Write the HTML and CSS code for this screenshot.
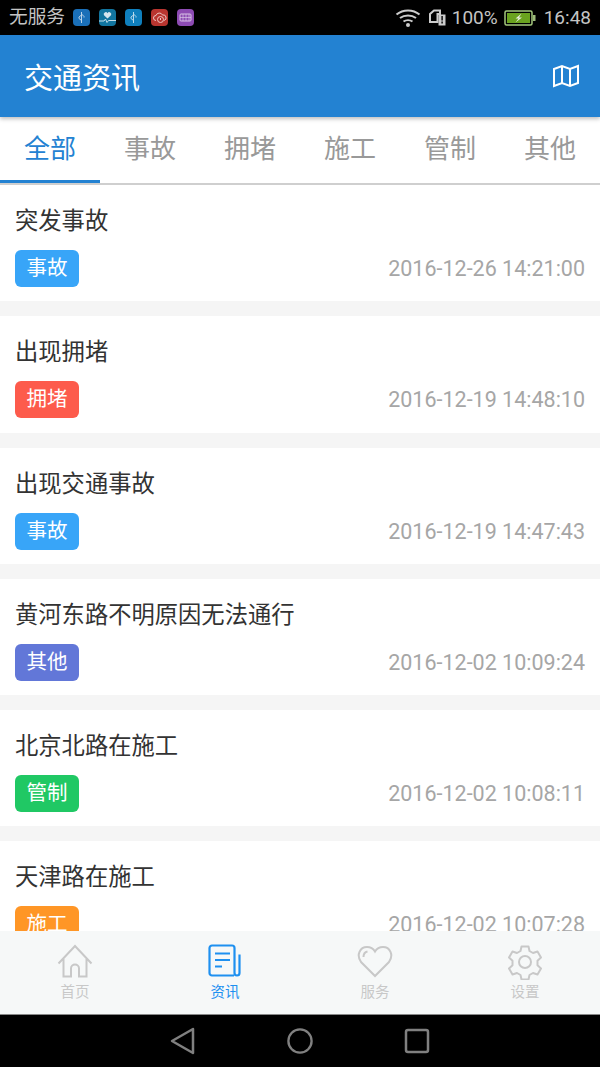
FILE: index.html
```html
<!DOCTYPE html>
<html lang="zh">
<head>
<meta charset="utf-8">
<title>交通资讯</title>
<link rel="stylesheet" href="styles.css">
</head>
<body>
<div class="app">
  <div class="status">
    <div class="status-left">
      <span class="carrier">无服务</span>
      <span class="notes">
        <svg class="note" viewBox="0 0 17 17"><rect width="17" height="17" rx="4" fill="#1a6fb8"/><path d="M8.5 3v11M8.5 6l-2.500 2v1.500l2.500 2M8.500 5l2.500 2.500v1" fill="none" stroke="#b9d3ea" stroke-width="1"/></svg>
        <svg class="note" viewBox="0 0 17 17"><rect width="17" height="17" rx="4" fill="#12759f"/><path d="M8.500 9.500L5 6.200a2 2 0 0 1 3.500-2a2 2 0 0 1 3.500 2z" fill="#d5e6ee"/><path d="M0 12h5l1.500-2l1.500 3.500l1.500-2h8" fill="none" stroke="#c4dde8" stroke-width="1"/></svg>
        <svg class="note" viewBox="0 0 17 17"><rect width="17" height="17" rx="4" fill="#0f7fbd"/><path d="M8.500 3v11M8.500 6l-2.500 2v1.500l2.500 2M8.500 5l2.500 2.500v1" fill="none" stroke="#b9d8ea" stroke-width="1"/></svg>
        <svg class="note" viewBox="0 0 17 17"><rect width="17" height="17" rx="4" fill="#b9352f"/><path d="M5 11.500a2.500 2.500 0 0 1 0-5a3.500 3.500 0 0 1 6.500-.5a2.800 2.800 0 0 1 1.500 5.500" fill="none" stroke="#edc6c3" stroke-width="1"/><circle cx="9.500" cy="10.500" r="3" fill="#b9352f" stroke="#edc6c3"/><path d="M9.500 9v2" stroke="#edc6c3"/></svg>
        <svg class="note" viewBox="0 0 17 17"><rect width="17" height="17" rx="4" fill="#8d4bb3"/><rect x="3" y="5" width="11" height="7" rx="1" fill="none" stroke="#d9c3e6"/><path d="M3 8.500h11M6 5v7M9 5v7M12 5v7" stroke="#d9c3e6" stroke-width=".7"/></svg>
      </span>
    </div>
    <div class="status-right">
      <svg class="wifi" viewBox="0 0 26 19"><path d="M1.500 6.500C8 1 18 1 24.500 6.500M5 10c4.500-3.500 11.500-3.500 16 0M8.500 13.500c2.500-1.800 6.500-1.800 9 0" fill="none" stroke="#ccc" stroke-width="2"/><circle cx="13" cy="17" r="2" fill="#ccc"/></svg>
      <svg class="sim" viewBox="0 0 18 18"><path d="M6 1.500h6v3.500H9.500v8H2v-8z" fill="none" stroke="#ccc" stroke-width="2"/><rect x="10.500" y="5.500" width="7" height="11" fill="#ccc"/><rect x="13.400" y="7" width="1.400" height="4.500" fill="#000"/><rect x="13.400" y="12.500" width="1.400" height="2" fill="#000"/></svg>
      <span class="batt-text">100%</span>
      <svg class="battery" viewBox="0 0 32 16"><rect x="1" y="1" width="27" height="14" rx="1.500" fill="#000" stroke="#a5c97e" stroke-width="1.500"/><rect x="3" y="3" width="23" height="10" fill="#6aa31f"/><rect x="29" y="5" width="2.500" height="6" fill="#9dbb7a"/><path d="M17.500 3.500l-6 5h3l-3 4l6.500-5h-3z" fill="#e8eedd"/></svg>
      <span class="clock">16:48</span>
    </div>
  </div>

  <header class="header">
    <h1 class="title">交通资讯</h1>
    <svg class="map" viewBox="0 0 26 24"><path d="M1 5l8-3l8 3l8-3v17l-8 3l-8-3l-8 3zM9 2v17M17 5v17" fill="none" stroke="#fff" stroke-width="2" stroke-linejoin="miter"/></svg>
  </header>

  <nav class="tabs">
    <a class="tab active">全部</a>
    <a class="tab">事故</a>
    <a class="tab">拥堵</a>
    <a class="tab">施工</a>
    <a class="tab">管制</a>
    <a class="tab">其他</a>
  </nav>

  <main class="list">
    <article class="card">
      <div class="card-title">突发事故</div>
      <div class="card-meta"><span class="tag tag-accident">事故</span><time class="date">2016-12-26 14:21:00</time></div>
    </article>
    <article class="card">
      <div class="card-title">出现拥堵</div>
      <div class="card-meta"><span class="tag tag-jam">拥堵</span><time class="date">2016-12-19 14:48:10</time></div>
    </article>
    <article class="card">
      <div class="card-title">出现交通事故</div>
      <div class="card-meta"><span class="tag tag-accident">事故</span><time class="date">2016-12-19 14:47:43</time></div>
    </article>
    <article class="card">
      <div class="card-title">黄河东路不明原因无法通行</div>
      <div class="card-meta"><span class="tag tag-other">其他</span><time class="date">2016-12-02 10:09:24</time></div>
    </article>
    <article class="card">
      <div class="card-title">北京北路在施工</div>
      <div class="card-meta"><span class="tag tag-control">管制</span><time class="date">2016-12-02 10:08:11</time></div>
    </article>
    <article class="card">
      <div class="card-title">天津路在施工</div>
      <div class="card-meta"><span class="tag tag-work">施工</span><time class="date">2016-12-02 10:07:28</time></div>
    </article>
  </main>

  <footer class="bottom">
    <a class="item">
      <svg class="item-icon" viewBox="0 0 36 36"><path d="M1.500 19.500L18 2l16.500 17.500M6.500 15v17.500h7.500v-8a4 4 0 0 1 8 0v8h7.500V15" fill="none" stroke="#c8c8c8" stroke-width="2"/></svg>
      <span class="item-label">首页</span>
    </a>
    <a class="item on">
      <svg class="item-icon" viewBox="0 0 36 36"><path d="M27 31.500H5a2.500 2.500 0 0 1-2.500-2.500V4A2.500 2.500 0 0 1 5 1.500h20A2.500 2.500 0 0 1 27.500 4v25a2.500 2.500 0 0 0 5 0V10.500" fill="none" stroke="#1e90f0" stroke-width="2.200"/><path d="M8 9.500h15M8 16h15M8 22.500h7" fill="none" stroke="#1e90f0" stroke-width="2.200"/></svg>
      <span class="item-label">资讯</span>
    </a>
    <a class="item">
      <svg class="item-icon" viewBox="0 0 36 36"><path d="M18 32L4 18C-1 11 3 3 10 3c4 0 6.500 2 8 4.500C19.500 5 22 3 26 3c7 0 11 8 6 15z" fill="none" stroke="#c8c8c8" stroke-width="2"/><path d="M6.500 13c0-3 1.500-5 4-5.500" fill="none" stroke="#c8c8c8" stroke-width="2"/></svg>
      <span class="item-label">服务</span>
    </a>
    <a class="item">
      <svg class="item-icon" viewBox="0 0 36 36"><path d="M14.500 2.500h7l1 4.500l3.500 2l4.500-1.500l3.500 6-3.500 3.200v4.600l3.500 3.200-3.500 6-4.500-1.500-3.500 2-1 4.500h-7l-1-4.500-3.500-2-4.500 1.500-3.500-6 3.500-3.200v-4.600l-3.500-3.200 3.500-6 4.500 1.500 3.500-2z" fill="none" stroke="#c8c8c8" stroke-width="2" stroke-linejoin="round"/><circle cx="18" cy="18" r="6" fill="none" stroke="#c8c8c8" stroke-width="2"/></svg>
      <span class="item-label">设置</span>
    </a>
  </footer>

  <div class="softkeys">
    <svg class="key" viewBox="0 0 26 28"><path d="M23 2L2 14l21 12z" fill="none" stroke="#808080" stroke-width="2.500" stroke-linejoin="round"/></svg>
    <svg class="key" viewBox="0 0 28 28"><circle cx="14" cy="14" r="12.500" fill="none" stroke="#808080" stroke-width="2.500"/></svg>
    <svg class="key" viewBox="0 0 26 26"><rect x="2" y="2" width="22" height="22" rx="2" fill="none" stroke="#808080" stroke-width="2.500"/></svg>
  </div>
</div>
</body>
</html>
```

FILE: styles.css
```css
* { box-sizing: border-box; }
html, body { margin: 0; padding: 0; }
body {
  background: #fff;
  font-family: Roboto, "Noto Sans CJK SC", sans-serif;
}
.app {
  width: 600px;
  height: 1067px;
  display: flex;
  flex-direction: column;
  overflow: hidden;
}
.status {
  flex: 0 0 35px;
  background: #000;
  color: #c4c4c4;
  display: flex;
  justify-content: space-between;
  align-items: center;
  padding: 0 9px;
}
.status-left, .status-right, .notes { display: flex; align-items: center; }
.carrier { font-size: 18.7px; line-height: 35px; }
.notes { gap: 9px; margin-left: 8px; }
.note { width: 17px; height: 17px; display: block; }
.wifi { width: 26px; height: 19px; margin-right: 7px; }
.sim { width: 18px; height: 18px; margin-right: 6px; }
.batt-text { font-size: 19px; }
.battery { width: 32px; height: 16px; margin: 0 8px 0 6px; }
.clock { font-size: 19px; }

.header {
  flex: 0 0 82px;
  background: #2382d2;
  display: flex;
  align-items: center;
  justify-content: space-between;
  padding: 0 21px 0 24px;
  position: relative;
  z-index: 2;
  box-shadow: 0 2px 4px rgba(0, 0, 0, .25);
}
.title {
  margin: 0;
  font-size: 29px;
  font-weight: 400;
  color: #fff;
}
.map { width: 26px; height: 24px; display: block; }

.tabs {
  flex: 0 0 66px;
  display: flex;
  border-bottom: 2px solid #cfcfcf;
  background: #fff;
}
.tab {
  flex: 0 0 100px;
  height: 66px;
  line-height: 64px;
  text-align: center;
  font-size: 26px;
  color: #999;
}
.tab.active {
  color: #2382d2;
  border-bottom: 3px solid #2382d2;
}

.list {
  flex: 1 1 0;
  min-height: 0;
  overflow: hidden;
  background: #f5f5f5;
  display: flex;
  flex-direction: column;
  gap: 15px;
}
.card {
  flex: 0 0 116.3px;
  background: #fff;
  padding: 20px 15px 0;
}
.card-title {
  font-size: 23.3px;
  line-height: 32px;
  color: #333;
}
.card-meta {
  margin-top: 13px;
  display: flex;
  justify-content: space-between;
  align-items: center;
}
.tag {
  width: 64px;
  height: 37px;
  line-height: 37px;
  border-radius: 6px;
  text-align: center;
  font-size: 20.5px;
  color: #fff;
}
.tag-accident { background: #38a5f8; }
.tag-jam { background: #fd5b4c; }
.tag-other { background: #6277d8; }
.tag-control { background: #20c864; }
.tag-work { background: #ff9626; }
.date {
  font-size: 21.5px;
  color: #a6a6a6;
}

.bottom {
  flex: 0 0 84px;
  background: #f6f8f8;
  border-bottom: 1px solid #888;
  display: flex;
  position: relative;
}
.item {
  flex: 1 1 0;
  display: flex;
  flex-direction: column;
  align-items: center;
  padding-top: 13px;
  color: #c8c8c8;
}
.item.on { color: #1e90f0; }
.item-icon { width: 36px; height: 36px; display: block; }
.item-label { font-size: 14.5px; line-height: 20px; margin-top: 3px; }

.softkeys {
  flex: 0 0 52px;
  background: #000;
  display: flex;
  justify-content: center;
  align-items: center;
  gap: 91px;
}
.key { width: 26px; height: 28px; display: block; }
```
